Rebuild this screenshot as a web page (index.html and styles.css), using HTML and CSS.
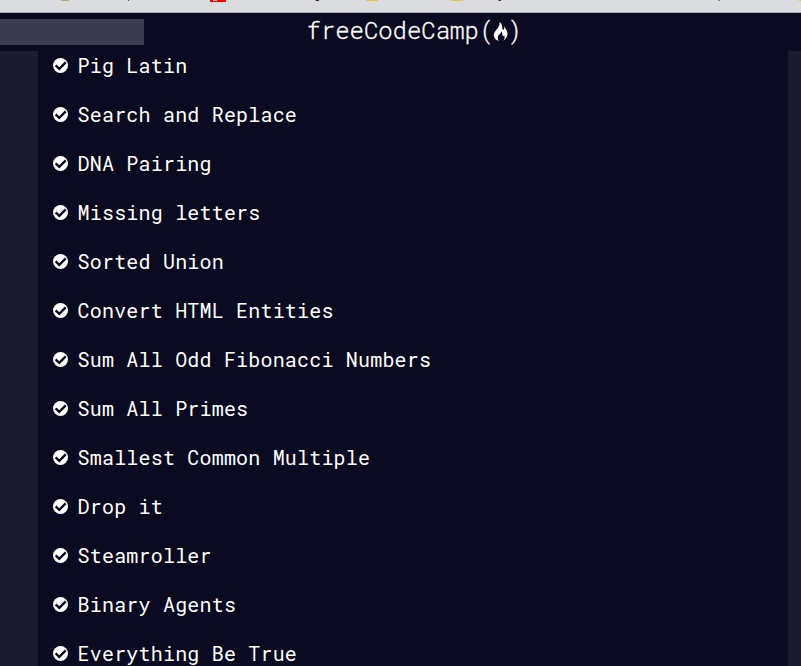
FILE: index.html
```html
<!DOCTYPE html>
<html lang="en">
<head>
<meta charset="utf-8">
<title>freeCodeCamp</title>
<link rel="stylesheet" href="styles.css">
</head>
<body>
<svg class="defs" width="0" height="0"><symbol id="check" viewBox="0 0 15 15"><circle cx="7.500" cy="7.500" r="7.500" fill="#fff"/><path d="M2.600 7.300l3.700 3.500 6.400-6.400" fill="none" stroke="#0a0a20" stroke-width="2.300"/></symbol></svg>
<div class="browser-bar">
<svg width="801" height="12" viewBox="0 0 801 12" shape-rendering="crispEdges">
<path fill="#adb17f" d="M61 0h8v1h-8z"/><path fill="#465096" d="M128 0h1v1h-1z"/>
<path fill="#f00" d="M210 0h16v2h-16z"/><path fill="#f6c9c9" d="M213 0h4v1h-4z"/>
<path fill="#343449" d="M316 0h3v1h-3zM499 0h2v1h-2z"/><path fill="#d98b43" d="M315 0h1v1h-1zM498 0h1v1h-1z"/>
<path fill="#ecc43f" d="M366 0h12v1h-12zM451 0h12v1h-12zM799 0h2v1h-2z"/><path fill="#8087ce" d="M718 0h2v1h-2z"/>
</svg>
</div>
<header class="navbar">
<div class="search"></div>
<div class="brand"><span class="wordmark">freeCodeCamp</span><span class="paren">(</span><svg class="flame" width="15" height="20" viewBox="0 0 15 20"><path fill="#fff" d="M6.600 0C8.800 1.300 9.200 4 9.400 6.200c.2 2.300 1.700 2 1.700-.3V4.800c1.900 2.300 3.500 4.500 3.400 7.200-.1 3-2.200 5.500-4.100 6.800 1.200-1.700 1.600-3.600.8-5.300-.5.900-1.500.8-1.700-.2-.3-1.400.1-2.500-1-4.100-.2 2.400-3.600 3.500-3.700 6-.1 1.500.2 2.700.9 3.800C2.700 17.900.8 15.900.8 13 .8 9 7.500 5.600 6.600 0z"/></svg><span class="paren">)</span></div>
</header>
<main class="page">
<ul class="challenges">
<li><svg><use href="#check"/></svg><span>Pig Latin</span></li>
<li><svg><use href="#check"/></svg><span>Search and Replace</span></li>
<li><svg><use href="#check"/></svg><span>DNA Pairing</span></li>
<li><svg><use href="#check"/></svg><span>Missing letters</span></li>
<li><svg><use href="#check"/></svg><span>Sorted Union</span></li>
<li><svg><use href="#check"/></svg><span>Convert HTML Entities</span></li>
<li><svg><use href="#check"/></svg><span>Sum All Odd Fibonacci Numbers</span></li>
<li><svg><use href="#check"/></svg><span>Sum All Primes</span></li>
<li><svg><use href="#check"/></svg><span>Smallest Common Multiple</span></li>
<li><svg><use href="#check"/></svg><span>Drop it</span></li>
<li><svg><use href="#check"/></svg><span>Steamroller</span></li>
<li><svg><use href="#check"/></svg><span>Binary Agents</span></li>
<li><svg><use href="#check"/></svg><span>Everything Be True</span></li>
</ul>
</main>
</body>
</html>
```
FILE: styles.css
```css
* { box-sizing: border-box; }
body {
  margin: 0;
  height: 666px;
  overflow: hidden;
  display: flex;
  flex-direction: column;
  background: #0a0a20;
  color: #fff;
  font-family: "Roboto Mono", "DejaVu Sans Mono", monospace;
}
.defs { display: none; }
.browser-bar {
  flex: none;
  height: 13px;
  background: #dadce0;
  border-bottom: 1px solid #a8a8ab;
}
.browser-bar svg { display: block; }
.navbar {
  flex: none;
  height: 38px;
  display: grid;
  grid-template-columns: 306.500px auto;
  background: #0a0a20;
}
.search {
  width: 144px;
  height: 26px;
  margin-top: 6px;
  background: #3b3b4f;
}
.brand {
  display: flex;
  height: 34px;
  align-items: center;
  font-size: 24px;
  font-weight: 300;
  line-height: 34px;
  -webkit-text-stroke: 0.3px #fff;
}
.wordmark { width: 173px; letter-spacing: -0.05px; }
.paren { width: 13px; }
.flame { flex: none; margin-top: 3px; }
.page {
  flex: 1;
  min-height: 0;
  padding: 0 13px 0 38px;
  background: #1b1b2f;
}
.challenges {
  height: 100%;
  margin: 0;
  padding: 0 0 0 15px;
  overflow: hidden;
  list-style: none;
  background: #0a0a20;
}
.challenges li {
  display: flex;
  align-items: center;
  gap: 9.600px;
  height: 29px;
  margin-bottom: 20px;
  font-size: 20px;
  line-height: 27px;
  letter-spacing: 0.19px;
  white-space: pre;
}
.challenges svg { flex: none; width: 15px; height: 15px; }
```
